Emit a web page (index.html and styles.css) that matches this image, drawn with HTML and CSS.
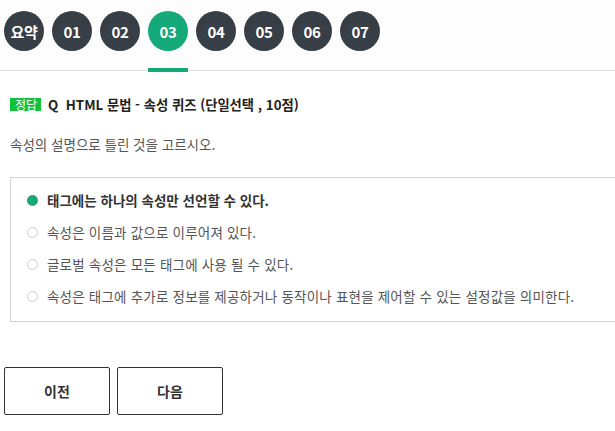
FILE: index.html
```html
<!DOCTYPE html>
<html lang="ko">
<head>
<meta charset="utf-8">
<link rel="stylesheet" href="styles.css">
</head>
<body>
<nav class="tabs">
  <div class="tab"><span class="dot">요약</span></div>
  <div class="tab"><span class="dot">01</span></div>
  <div class="tab"><span class="dot">02</span></div>
  <div class="tab active"><span class="dot">03</span></div>
  <div class="tab"><span class="dot">04</span></div>
  <div class="tab"><span class="dot">05</span></div>
  <div class="tab"><span class="dot">06</span></div>
  <div class="tab"><span class="dot">07</span></div>
</nav>
<main class="quiz">
  <h2 class="title"><span class="badge">정답</span><span>Q&nbsp; HTML 문법 - 속성 퀴즈 (단일선택 , 10점)</span></h2>
  <p class="question">속성의 설명으로 틀린 것을 고르시오.</p>
  <ul class="options">
    <li class="opt selected"><span class="radio"></span>태그에는 하나의 속성만 선언할 수 있다.</li>
    <li class="opt"><span class="radio"></span>속성은 이름과 값으로 이루어져 있다.</li>
    <li class="opt"><span class="radio"></span>글로벌 속성은 모든 태그에 사용 될 수 있다.</li>
    <li class="opt"><span class="radio"></span>속성은 태그에 추가로 정보를 제공하거나 동작이나 표현을 제어할 수 있는 설정값을 의미한다.</li>
  </ul>
  <div class="buttons">
    <button class="btn">이전</button>
    <button class="btn">다음</button>
  </div>
</main>
</body>
</html>
```

FILE: styles.css
```css
* { box-sizing: border-box; }
html, body { margin: 0; padding: 0; background: #fff; overflow: hidden; }
body {
  font-family: "Noto Sans CJK KR", "Noto Sans", sans-serif;
  color: #333;
  width: 615px;
}
.tabs {
  display: flex;
  gap: 8px;
  padding: 11px 0 0 4px;
  border-bottom: 1px solid #e3e3e3;
  height: 71px;
  background: #fdfdfd;
}
.tab {
  width: 40px;
  display: flex;
  flex-direction: column;
  align-items: center;
  height: 60px;
  position: relative;
}
.dot {
  width: 40px;
  height: 40px;
  border-radius: 50%;
  background: #373e45;
  color: #fff;
  font-weight: 700;
  font-size: 15px;
  display: flex;
  align-items: center;
  justify-content: center;
  letter-spacing: -0.3px;
}
.tab.active .dot { background: #15a878; }
.tab.active::after {
  content: "";
  position: absolute;
  left: 0;
  right: 0;
  bottom: -1px;
  height: 4px;
  background: #15a878;
}
.quiz { padding: 0 0 0 10px; overflow: hidden; }
.title {
  margin: 23px 0 0;
  font-size: 13.3px;
  font-weight: 700;
  color: #222;
  display: flex;
  align-items: center;
  gap: 7px;
  height: 20px;
}
.badge {
  background: #12c13c;
  color: #fff;
  font-size: 12px;
  font-weight: 400;
  padding: 0 4px 0 5px;
  height: 13px;
  line-height: 13px;
  display: inline-block;
}
.question {
  margin: 20px 0 0;
  font-size: 13.5px;
  color: #555;
  line-height: 20px;
}
.options {
  list-style: none;
  margin: 23px 0 0;
  padding: 6px 0 9px 16px;
  border: 1px solid #d6d6d6;
  border-right: none;
  width: 640px;
}
.opt {
  display: flex;
  align-items: center;
  gap: 9px;
  height: 32px;
  font-size: 13.5px;
  letter-spacing: 0.2px;
  color: #555;
}
.opt.selected { font-weight: 700; color: #333; letter-spacing: 0; }
.radio {
  width: 11px;
  height: 11px;
  border-radius: 50%;
  border: 1px solid #cfcfcf;
  background: #fff;
  flex: none;
}
.opt.selected .radio { background: #15a878; border-color: #15a878; }
.buttons {
  display: flex;
  gap: 7px;
  margin: 45px 0 0 -6px;
}
.btn {
  width: 106px;
  height: 48px;
  border: 1px solid #333;
  border-radius: 2px;
  background: #fff;
  font-family: inherit;
  font-size: 14px;
  font-weight: 700;
  color: #333;
}
```
